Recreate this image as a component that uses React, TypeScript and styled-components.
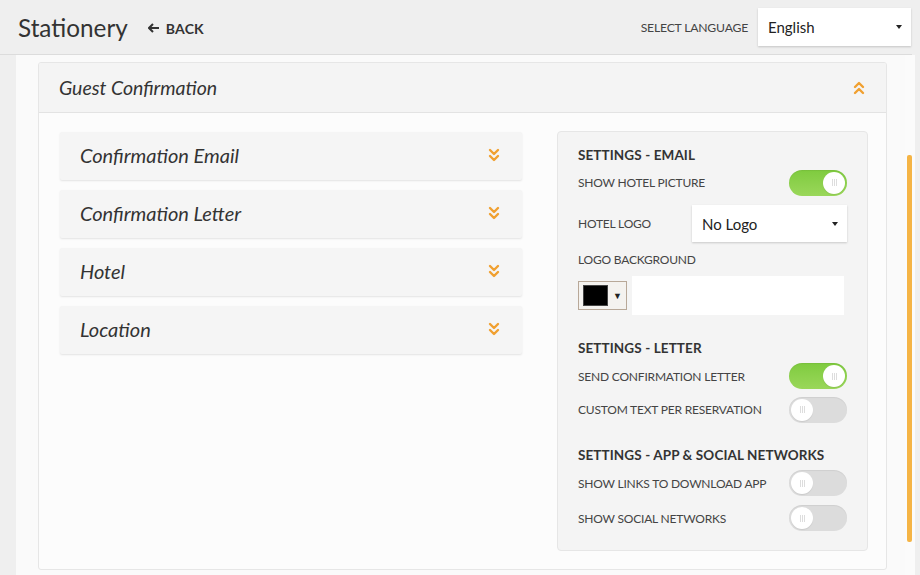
import React from 'react'
import styled, { createGlobalStyle } from 'styled-components'

const GlobalStyle = createGlobalStyle`
  html, body {
    margin: 0;
    padding: 0;
    height: 100%;
  }
  body {
    background: #efefef;
    font-family: Lato, "Open Sans", sans-serif;
    color: #333;
    overflow: hidden;
  }
`

const Page = styled.div`
  width: 920px;
  height: 575px;
  display: flex;
  flex-direction: column;
`

const Header = styled.header`
  flex: 0 0 54px;
  display: flex;
  align-items: center;
  padding: 0 1px 0 18px;
  margin-right: 8px;
  border-bottom: 1px solid #dcdcdc;
`

const Title = styled.h1`
  margin: 0;
  font-size: 24.3px;
  font-weight: 400;
  color: #333;
`

const BackLink = styled.a`
  display: flex;
  align-items: center;
  gap: 6px;
  margin-left: 20px;
  font-size: 14px;
  font-weight: 700;
  color: #333;
  letter-spacing: 0.2px;
  margin-top: 2px;
`

const Spacer = styled.div`
  flex: 1;
`

const LangLabel = styled.span`
  font-size: 12.2px;
  letter-spacing: -0.2px;
  color: #444;
  margin-right: 10px;
`

const SelectBox = styled.div<{ $width: number; $height: number }>`
  width: ${(p) => p.$width}px;
  height: ${(p) => p.$height}px;
  box-sizing: border-box;
  background: #fff;
  box-shadow: 0 1px 2px rgba(0, 0, 0, 0.18);
  display: flex;
  align-items: center;
  justify-content: space-between;
  padding: 0 9px 0 10px;
  font-size: 15px;
  color: #222;
`

const Caret = styled.span`
  width: 0;
  height: 0;
  border-left: 3px solid transparent;
  border-right: 3px solid transparent;
  border-top: 4px solid #222;
`

const Body = styled.div`
  flex: 1;
  display: flex;
  min-height: 0;
`

const Main = styled.main`
  margin-left: 16px;
  width: 889px;
  background: #fafafa;
  padding: 7px 18px 0 22px;
  box-sizing: border-box;
`

const ScrollTrack = styled.div`
  width: 10px;
  background: #fbfbfb;
  padding-top: 100px;
  box-sizing: border-box;
`

const ScrollThumb = styled.div`
  margin-left: 2px;
  width: 5px;
  height: 387px;
  border-radius: 2px;
  background: #f5b445;
`

const Card = styled.section`
  border: 1px solid #e6e6e6;
  border-radius: 3px;
  background: #fcfcfc;
  height: 508px;
  box-sizing: border-box;
  overflow: hidden;
`

const CardHeader = styled.div`
  height: 49px;
  display: flex;
  align-items: center;
  justify-content: space-between;
  padding: 0 21px 0 20px;
  background: #f4f4f4;
  border-bottom: 1px solid #e3e3e3;
`

const ItalicTitle = styled.span<{ $size: number }>`
  font-style: italic;
  font-size: ${(p) => p.$size}px;
  color: #333;
`

const CardBody = styled.div`
  display: flex;
  gap: 35px;
  padding: 18px 18px 0 21px;
`

const LeftColumn = styled.div`
  width: 462px;
  display: flex;
  flex-direction: column;
  gap: 10px;
  padding-top: 1px;
`

const AccordionItem = styled.div`
  height: 48px;
  display: flex;
  align-items: center;
  justify-content: space-between;
  padding: 0 22px 2px 20px;
  box-sizing: border-box;
  background: #f5f5f5;
  border-radius: 2px;
  box-shadow: 0 1px 2px rgba(0, 0, 0, 0.1);
`

const SettingsPanel = styled.div`
  flex: 1;
  height: 420px;
  box-sizing: border-box;
  background: #f4f4f4;
  border: 1px solid #e6e6e6;
  border-radius: 4px;
  padding: 15px 20px 0 20px;
`

const SectionTitle = styled.h3<{ $top?: number }>`
  margin: ${(p) => p.$top ?? 0}px 0 4px;
  font-size: 13.5px;
  font-weight: 700;
  color: #333;
  letter-spacing: 0.1px;
`

const Row = styled.div<{ $height: number }>`
  height: ${(p) => p.$height}px;
  display: flex;
  align-items: center;
  justify-content: space-between;
`

const Label = styled.span`
  font-size: 12px;
  letter-spacing: -0.2px;
  color: #444;
`

const ToggleTrack = styled.div<{ $on: boolean }>`
  width: 58px;
  height: 26px;
  box-sizing: border-box;
  border-radius: 13px;
  padding: 2px;
  display: flex;
  justify-content: ${(p) => (p.$on ? 'flex-end' : 'flex-start')};
  background: ${(p) =>
    p.$on ? 'linear-gradient(180deg, #7fcb3f 0%, #9ad75a 100%)' : '#dcdcdc'};
  box-shadow: inset 0 1px 1px rgba(0, 0, 0, 0.06);
`

const ToggleKnob = styled.div`
  width: 22px;
  height: 22px;
  border-radius: 50%;
  background: #fff;
  display: flex;
  align-items: center;
  justify-content: center;
  gap: 1px;
  box-shadow: 0 1px 1px rgba(0, 0, 0, 0.08);
  & > i {
    width: 1px;
    height: 7px;
    background: #ddd;
  }
`

const ColorRow = styled.div`
  display: flex;
  align-items: center;
  gap: 5px;
  margin-top: 6px;
`

const ColorPicker = styled.div`
  width: 49px;
  height: 29px;
  box-sizing: border-box;
  border: 1px solid #b8a898;
  background: #f4f2ef;
  display: flex;
  align-items: center;
  padding: 0 4px;
  gap: 5px;
  font-size: 9px;
  color: #222;
`

const Swatch = styled.span`
  width: 24px;
  height: 19px;
  background: #000;
  border: 1px solid #444;
`

const TextInput = styled.div`
  width: 212px;
  height: 39px;
  background: #fff;
`

function ChevronDouble({ up = false }: { up?: boolean }) {
  return (
    <svg width="12" height="14" viewBox="0 0 12 14">
      <g
        fill="none"
        stroke="#f0a030"
        strokeWidth="2.4"
        strokeLinecap="round"
        strokeLinejoin="round"
        transform={up ? 'rotate(180 6 7)' : undefined}
      >
        <polyline points="2,2 6,6 10,2" />
        <polyline points="2,8 6,12 10,8" />
      </g>
    </svg>
  )
}

function Toggle({ on }: { on: boolean }) {
  return (
    <ToggleTrack $on={on}>
      <ToggleKnob>
        <i />
        <i />
        <i />
      </ToggleKnob>
    </ToggleTrack>
  )
}

const sections = ['Confirmation Email', 'Confirmation Letter', 'Hotel', 'Location']

export default function App() {
  return (
    <Page>
      <GlobalStyle />
      <Header>
        <Title>Stationery</Title>
        <BackLink>
          <svg width="12" height="10" viewBox="0 0 12 10">
            <path d="M5 1 L1 5 L5 9 M1.5 5 H11" fill="none" stroke="#333" strokeWidth="2" />
          </svg>
          BACK
        </BackLink>
        <Spacer />
        <LangLabel>SELECT LANGUAGE</LangLabel>
        <SelectBox $width={153} $height={38}>
          English
          <Caret />
        </SelectBox>
      </Header>
      <Body>
        <Main>
          <Card>
            <CardHeader>
              <ItalicTitle $size={19.5}>Guest Confirmation</ItalicTitle>
              <ChevronDouble up />
            </CardHeader>
            <CardBody>
              <LeftColumn>
                {sections.map((s) => (
                  <AccordionItem key={s}>
                    <ItalicTitle $size={20}>{s}</ItalicTitle>
                    <ChevronDouble />
                  </AccordionItem>
                ))}
              </LeftColumn>
              <SettingsPanel>
                <SectionTitle>SETTINGS - EMAIL</SectionTitle>
                <Row $height={31}>
                  <Label>SHOW HOTEL PICTURE</Label>
                  <Toggle on />
                </Row>
                <Row $height={51}>
                  <Label>HOTEL LOGO</Label>
                  <SelectBox $width={155} $height={37}>
                    No Logo
                    <Caret />
                  </SelectBox>
                </Row>
                <Row $height={21}>
                  <Label>LOGO BACKGROUND</Label>
                </Row>
                <ColorRow>
                  <ColorPicker>
                    <Swatch />▼
                  </ColorPicker>
                  <TextInput />
                </ColorRow>
                <SectionTitle $top={25}>SETTINGS - LETTER</SectionTitle>
                <Row $height={32}>
                  <Label>SEND CONFIRMATION LETTER</Label>
                  <Toggle on />
                </Row>
                <Row $height={35}>
                  <Label>CUSTOM TEXT PER RESERVATION</Label>
                  <Toggle on={false} />
                </Row>
                <SectionTitle $top={20}>SETTINGS - APP &amp; SOCIAL NETWORKS</SectionTitle>
                <Row $height={32}>
                  <Label>SHOW LINKS TO DOWNLOAD APP</Label>
                  <Toggle on={false} />
                </Row>
                <Row $height={38}>
                  <Label>SHOW SOCIAL NETWORKS</Label>
                  <Toggle on={false} />
                </Row>
              </SettingsPanel>
            </CardBody>
          </Card>
        </Main>
        <ScrollTrack>
          <ScrollThumb />
        </ScrollTrack>
      </Body>
    </Page>
  )
}
